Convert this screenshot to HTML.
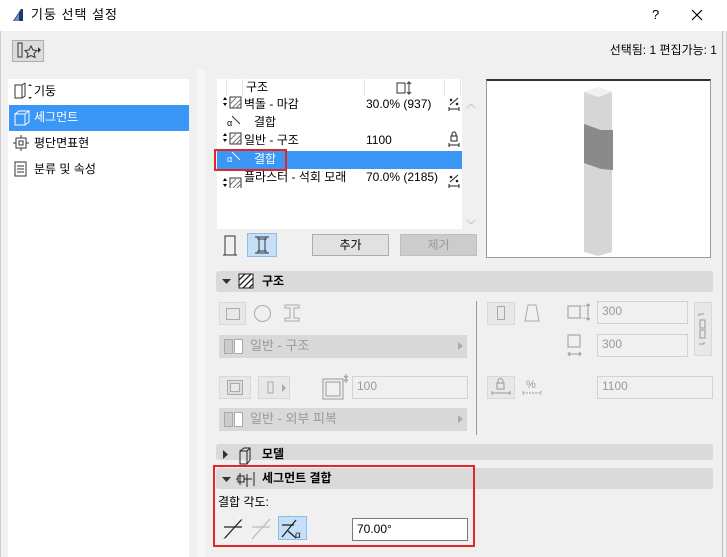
<!DOCTYPE html>
<html><head><meta charset="utf-8"><style>
*{box-sizing:border-box;margin:0;padding:0}
body{width:727px;height:557px;overflow:hidden;background:#f0f0f0;font-family:"Liberation Sans","Noto Sans CJK KR",sans-serif;font-size:12px;color:#000;position:relative}
.a{position:absolute}
.t{position:absolute;white-space:nowrap;line-height:14px}
.gray{color:#9a9a9a}
.hdr{position:absolute;left:216px;width:497px;height:21px;background:#dadada;border-radius:3px}
.box{position:absolute;background:#e8e8e8;border:1px solid #d8d8d8}
.inp{position:absolute;background:#f0f0f0;border:1px solid #d2d2d2;color:#9a9a9a;padding-left:4px;line-height:19px;font-size:12px}
.btn{position:absolute;background:#cdcdcd;border:1px solid #c4c4c4}
</style></head><body>
<div class="a" style="left:0;top:0;width:727px;height:31px;background:#fff"></div>
<svg class="a" style="left:12px;top:8px" width="12" height="14"><path d="M1 13 L9 1 L11 1 L11 13 Z" fill="#1b3a6b"/><path d="M2 13 L7 5 L7 13Z" fill="#6a8fc7"/></svg>
<div class="t" style="left:31px;top:8px;font-size:13px;letter-spacing:1px">기둥 선택 설정</div>
<div class="t" style="left:652px;top:8px;font-size:13px">?</div>
<svg class="a" style="left:691px;top:9px" width="12" height="12"><path d="M1 1L11 11M11 1L1 11" stroke="#000" stroke-width="1.2"/></svg>
<div class="a" style="left:0;top:31px;width:1px;height:526px;background:#cfcfcf"></div>
<div class="a" style="left:726px;top:31px;width:1px;height:526px;background:#cfcfcf"></div>

<div class="a" style="left:12px;top:40px;width:32px;height:22px;background:#dcdcdc;border:1px solid #adadad"></div>
<svg class="a" style="left:15px;top:42px" width="28" height="18"><rect x="3" y="1" width="4" height="14" fill="none" stroke="#333"/><path d="M16 4l2 4 4 .5-3 3 1 4-4-2-4 2 1-4-3-3 4-.5z" fill="none" stroke="#333"/><path d="M23 5l3 3-3 3z" fill="#333"/></svg>
<div class="t" style="right:10px;top:43px">선택됨: 1 편집가능: 1</div>

<div class="a" style="left:8px;top:79px;width:181px;height:478px;background:#fff"></div>
<div class="a" style="left:9px;top:105px;width:180px;height:26px;background:#3a97f6"></div>
<svg class="a" style="left:13px;top:82px" width="20" height="20"><rect x="2" y="3" width="7" height="13" fill="none" stroke="#333"/><path d="M9 3l3-2M9 16l3-2v-13" stroke="#333" fill="none"/><path d="M15 4l2-2 2 2zM15 15l2 2 2-2z" fill="#333"/></svg>
<div class="t" style="left:34px;top:84px">기둥</div>
<svg class="a" style="left:13px;top:109px" width="18" height="18"><path d="M2 5h10v11H2zM2 5l4-3h10v11l-4 3M12 5l4-3" fill="none" stroke="#fff"/></svg>
<div class="t" style="left:34px;top:110px;color:#fff">세그먼트</div>
<svg class="a" style="left:13px;top:135px" width="16" height="16"><rect x="3" y="3" width="10" height="10" fill="none" stroke="#333"/><rect x="6" y="6" width="4" height="4" fill="none" stroke="#333"/><path d="M8 0v3M8 13v3M0 8h3M13 8h3" stroke="#333"/></svg>
<div class="t" style="left:34px;top:136px">평단면표현</div>
<svg class="a" style="left:13px;top:161px" width="16" height="16"><rect x="2" y="1" width="11" height="14" fill="none" stroke="#333"/><path d="M4 5h7M4 8h7M4 11h7" stroke="#333"/></svg>
<div class="t" style="left:34px;top:162px">분류 및 속성</div>

<div class="a" style="left:197px;top:70px;width:8px;height:487px;background:#f7f7f7"></div>
<div class="a" style="left:722px;top:31px;width:1px;height:526px;background:#bcbcbc"></div>

<!-- table -->
<div class="a" style="left:217px;top:79px;width:245px;height:150px;background:#fff"></div>
<div class="a" style="left:226px;top:79px;width:1px;height:17px;background:#e6e6e6"></div>
<div class="a" style="left:242px;top:79px;width:1px;height:17px;background:#e6e6e6"></div>
<div class="a" style="left:364px;top:79px;width:1px;height:17px;background:#e6e6e6"></div>
<div class="a" style="left:444px;top:79px;width:1px;height:17px;background:#e6e6e6"></div>
<div class="a" style="left:460px;top:79px;width:1px;height:17px;background:#e6e6e6"></div>
<div class="t" style="left:246px;top:80px">구조</div>
<svg class="a" style="left:396px;top:81px" width="18" height="14"><rect x="1" y="2" width="8" height="10" fill="none" stroke="#333"/><path d="M13 1v12M11 3l2-2 2 2M11 11l2 2 2-2" stroke="#333" fill="none"/></svg>
<div class="a" style="left:217px;top:151px;width:245px;height:18px;background:#3a97f6"></div>
<div class="a" style="left:214px;top:149px;width:73px;height:22px;border:2px solid #e52626"></div>
<svg class="a" style="left:219px;top:96px" width="245" height="92">
<g fill="#000"><path d="M4 4l2-3 2 3zM4 7l2 3 2-3z"/><path d="M4 40l2-3 2 3zM4 43l2 3 2-3z"/><path d="M4 85l2-3 2 3zM4 88l2 3 2-3z"/></g>
<g fill="none" stroke="#333"><rect x="11" y="1" width="11" height="11"/><rect x="11" y="37" width="11" height="11"/><rect x="11" y="82" width="11" height="11"/>
<path d="M11 8l6-6M13 12l9-9M17 12l5-5M11 44l6-6M13 48l9-9M17 48l5-5M11 89l6-6M13 93l9-9M17 93l5-5" stroke="#777"/>
<path d="M13 20l8 8"/><path d="M13 56l8 8" stroke="#fff"/></g>
<text x="8" y="30" font-size="9" font-family="Liberation Sans">α</text>
<text x="8" y="66" font-size="9" fill="#fff" font-family="Liberation Sans">α</text>
</svg>
<div class="t" style="left:244px;top:97px">벽돌 - 마감</div>
<div class="t" style="left:366px;top:97px">30.0% (937)</div>
<div class="t" style="left:254px;top:115px">결합</div>
<div class="t" style="left:244px;top:133px">일반 - 구조</div>
<div class="t" style="left:366px;top:133px">1100</div>
<div class="t" style="left:254px;top:152px;color:#fff">결합</div>
<div class="t" style="left:244px;top:170px">플라스터 - 석회 모래</div>
<div class="t" style="left:366px;top:170px">70.0% (2185)</div>
<svg class="a" style="left:446px;top:96px" width="16" height="92">
<g stroke="#222" fill="none"><path d="M3 13h10M3 11v4M13 11v4M4 9l8-7"/><path d="M3 49h10M3 47v4M13 47v4"/><rect x="5" y="40" width="6" height="5"/><path d="M6 40v-2a2 2 0 0 1 4 0v2"/><path d="M3 90h10M3 88v4M13 88v4M4 86l8-7"/></g>
<g fill="#222"><circle cx="5" cy="4" r="1.3"/><circle cx="11" cy="8" r="1.3"/><circle cx="5" cy="81" r="1.3"/><circle cx="11" cy="85" r="1.3"/></g></svg>
<svg class="a" style="left:465px;top:100px" width="12" height="130"><path d="M2 8l4-4 4 4M2 120l4 4 4-4" stroke="#c8c8c8" fill="none"/></svg>

<svg class="a" style="left:222px;top:234px" width="16" height="22"><path d="M3 21V2h10v19M1 21h14" stroke="#333" fill="none"/></svg>
<div class="a" style="left:247px;top:233px;width:30px;height:24px;background:#c5dff8;border:1px solid #8cbce8"></div>
<svg class="a" style="left:252px;top:235px" width="20" height="20"><path d="M3 2h14M3 18h14M6 2v2h8V2M6 18v-2h8v2M7 4v12M13 4v12" stroke="#333" fill="none"/></svg>
<div class="a" style="left:312px;top:234px;width:77px;height:22px;background:#e1e1e1;border:1px solid #adadad;text-align:center;line-height:20px">추가</div>
<div class="a" style="left:400px;top:234px;width:77px;height:22px;background:#cccccc;border:1px solid #bfbfbf;text-align:center;line-height:20px;color:#9a9a9a">제거</div>

<!-- preview -->
<div class="a" style="left:486px;top:79px;width:225px;height:179px;background:#fff;border:1px solid #9a9a9a;border-top:2px solid #333"></div>
<svg class="a" style="left:583px;top:86px" width="32" height="170">
<path d="M1 6l14-5 14 5v160l-14 4-14-4z" fill="#d6d6d6"/><path d="M1 6l14-5 14 5-14 5z" fill="#f2f2f2"/>
<path d="M1 38l17 6h12v40l-12-1-17-6z" fill="#8a8a8a"/></svg>

<!-- 구조 section -->
<div class="hdr" style="top:271px"></div>
<svg class="a" style="left:222px;top:278px" width="10" height="8"><path d="M0 1h9L4.5 6z" fill="#333"/></svg>
<svg class="a" style="left:238px;top:273px" width="17" height="17"><rect x="1" y="1" width="14" height="14" fill="#fff" stroke="#222"/><path d="M1 7l6-6M1 13l12-12M5 15l10-10M11 15l4-4" stroke="#222" stroke-width="1.3"/></svg>
<div class="t" style="left:262px;top:274px;font-weight:bold">구조</div>

<div class="box" style="left:219px;top:302px;width:27px;height:23px"></div>
<div class="a" style="left:226px;top:308px;width:14px;height:12px;border:1px solid #aaa"></div>
<div class="a" style="left:254px;top:305px;width:17px;height:17px;border:1px solid #aaa;border-radius:50%"></div>
<svg class="a" style="left:283px;top:303px" width="18" height="20"><path d="M2 2h14v3H11v10h5v3H2v-3h5V5H2z" fill="none" stroke="#aaa"/></svg>
<div class="box" style="left:219px;top:335px;width:248px;height:23px;background:#d9d9d9"></div>
<div class="a" style="left:224px;top:339px;width:9px;height:15px;background:#ccc;border:1px solid #aaa"></div>
<div class="a" style="left:234px;top:339px;width:9px;height:15px;background:#fff;border:1px solid #aaa"></div>
<div class="t gray" style="left:250px;top:339px;font-size:13px">일반 - 구조</div>
<svg class="a" style="left:458px;top:341px" width="6" height="10"><path d="M0 1l5 4-5 4z" fill="#aaa"/></svg>

<div class="box" style="left:219px;top:376px;width:32px;height:23px"></div>
<div class="a" style="left:227px;top:380px;width:16px;height:15px;border:1px solid #aaa;box-shadow:inset 0 0 0 2px #ddd,inset 0 0 0 3px #aaa"></div>
<div class="box" style="left:258px;top:376px;width:32px;height:23px"></div>
<svg class="a" style="left:262px;top:379px" width="26" height="18"><rect x="6" y="3" width="5" height="11" fill="none" stroke="#aaa"/><path d="M20 5l4 4-4 4z" fill="#aaa"/></svg>
<svg class="a" style="left:322px;top:373px" width="28" height="28"><rect x="1" y="6" width="20" height="20" fill="none" stroke="#999"/><rect x="4" y="9" width="14" height="14" fill="none" stroke="#999"/><path d="M24 1v9M22 3l2 2 2-2M22 8l2-2 2 2" stroke="#999" fill="none"/></svg>
<div class="inp" style="left:352px;top:376px;width:116px;height:23px;background:#f0f0f0">100</div>
<div class="box" style="left:219px;top:408px;width:248px;height:23px;background:#d9d9d9"></div>
<div class="a" style="left:224px;top:412px;width:9px;height:15px;background:#ccc;border:1px solid #aaa"></div>
<div class="a" style="left:234px;top:412px;width:9px;height:15px;background:#fff;border:1px solid #aaa"></div>
<div class="t gray" style="left:250px;top:412px;font-size:13px">일반 - 외부 피복</div>
<svg class="a" style="left:458px;top:414px" width="6" height="10"><path d="M0 1l5 4-5 4z" fill="#aaa"/></svg>

<div class="a" style="left:476px;top:301px;width:1px;height:134px;background:#9a9a9a"></div>
<div class="box" style="left:487px;top:302px;width:28px;height:23px"></div>
<div class="a" style="left:497px;top:306px;width:8px;height:14px;border:1px solid #aaa"></div>
<svg class="a" style="left:524px;top:303px" width="16" height="20"><path d="M4 2h8l3 16H1z" fill="none" stroke="#aaa"/></svg>
<svg class="a" style="left:567px;top:302px" width="26" height="20"><rect x="1" y="4" width="12" height="12" fill="none" stroke="#999"/><path d="M13 4h6M13 16h6" stroke="#999" stroke-dasharray="1 1"/><path d="M21 2v16M19 4l2-2 2 2M19 16l2 2 2-2" stroke="#999" fill="none"/></svg>
<div class="inp" style="left:597px;top:301px;width:91px;height:23px">300</div>
<svg class="a" style="left:567px;top:334px" width="16" height="24"><rect x="1" y="1" width="12" height="12" fill="none" stroke="#999"/><path d="M1 20h13M3 18l-2 2 2 2M12 18l2 2-2 2" stroke="#999" fill="none"/></svg>
<div class="inp" style="left:597px;top:334px;width:91px;height:23px">300</div>
<div class="box" style="left:694px;top:302px;width:18px;height:54px"></div>
<svg class="a" style="left:696px;top:312px" width="14" height="34"><path d="M3 2h5M3 2v2M4 8h5v8H4zM4 18h5v8H4zM3 32h5M8 32v-2" stroke="#999" fill="none"/></svg>
<div class="box" style="left:487px;top:376px;width:28px;height:23px"></div>
<svg class="a" style="left:489px;top:377px" width="24" height="20"><rect x="8" y="6" width="7" height="6" fill="none" stroke="#999"/><path d="M9 6V4a2.5 2.5 0 0 1 5 0v2M3 16h18M3 14v4M21 14v4" stroke="#999" fill="none"/></svg>
<svg class="a" style="left:521px;top:377px" width="22" height="22"><text x="5" y="11" font-size="11" fill="#999" font-family="Liberation Sans">%</text><path d="M2 16h18M2 14v4M20 14v4" stroke="#999" stroke-dasharray="2 1"/></svg>
<div class="inp" style="left:597px;top:376px;width:116px;height:23px">1100</div>

<!-- 모델 -->
<div class="hdr" style="top:444px;height:16px"></div>
<svg class="a" style="left:223px;top:450px" width="6" height="9"><path d="M0 0l5 4.5L0 9z" fill="#333"/></svg>
<svg class="a" style="left:239px;top:447px" width="14" height="18"><path d="M1 4h7v13H1zM1 4l4-3h6v12l-3 4M8 4l3-3" fill="none" stroke="#222"/></svg>
<div class="t" style="left:262px;top:447px;font-weight:bold">모델</div>

<!-- 세그먼트 결합 -->
<div class="hdr" style="top:468px"></div>
<svg class="a" style="left:222px;top:476px" width="10" height="8"><path d="M0 1h9L4.5 6z" fill="#333"/></svg>
<svg class="a" style="left:236px;top:470px" width="20" height="18"><rect x="2" y="6" width="6" height="6" fill="none" stroke="#222"/><path d="M0 9h2M8 9h8M11 4v13M18 2v14" stroke="#222" fill="none"/><path d="M4 3v12" stroke="#222"/></svg>
<div class="t" style="left:262px;top:471px;font-weight:bold">세그먼트 결합</div>
<div class="t" style="left:218px;top:495px">결합 각도:</div>
<svg class="a" style="left:222px;top:515px" width="22" height="26"><path d="M2 12h18M2 24L20 4M6 12" stroke="#222" fill="none" stroke-width="1.3"/><path d="M2 24h4M16 4h4" stroke="#fff"/></svg>
<svg class="a" style="left:250px;top:515px" width="22" height="26"><path d="M2 12h18M2 24L20 4" stroke="#bbb" fill="none" stroke-width="1.3"/></svg>
<div class="a" style="left:278px;top:516px;width:29px;height:24px;background:#c5dff8;border:1px solid #8cbce8"></div>
<svg class="a" style="left:280px;top:517px" width="26" height="22"><path d="M2 8h12M2 20L16 3M8 14l8 7" stroke="#222" fill="none" stroke-width="1.3"/><text x="15" y="21" font-size="10" font-family="Liberation Sans" fill="#222">α</text></svg>
<div class="a" style="left:352px;top:518px;width:116px;height:23px;background:#fff;border:1px solid #7a7a7a;padding-left:4px;line-height:21px">70.00°</div>
<div class="a" style="left:213px;top:465px;width:262px;height:82px;border:2px solid #e52626"></div>
</body></html>
